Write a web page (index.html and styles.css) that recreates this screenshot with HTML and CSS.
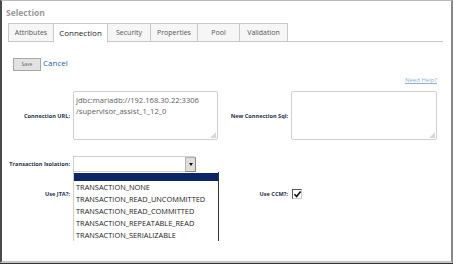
FILE: index.html
```html
<!DOCTYPE html>
<html lang="en">
	<head>
		<meta charset="UTF-8" />
		<meta name="viewport" content="width=device-width, initial-scale=1.0" />
		<title>Selection</title>
		<link rel="stylesheet" href="styles.css">
	</head>
	<body>
		<div class="frame">
			<h1 class="title">Selection</h1>
			<ul class="tabs">
				<li class="tab tab-attr">Attributes</li>
				<li class="tab tab-conn active">Connection</li>
				<li class="tab tab-sec">Security</li>
				<li class="tab tab-prop">Properties</li>
				<li class="tab tab-pool">Pool</li>
				<li class="tab tab-val">Validation</li>
			</ul>
			<div class="actions">
				<button class="btn">Save</button>
				<a class="link" href="#">Cancel</a>
			</div>
			<div class="help"><a href="#">Need Help?</a></div>
			<div class="form">
				<label class="label">Connection URL:</label>
				<div class="area">jdbc:mariadb://192.168.30.22:3306<br />/supervisor_assist_1_12_0<span class="grip"></span></div>
				<label class="label">New Connection Sql:</label>
				<div class="area"><span class="grip"></span></div>

				<label class="label">Transaction Isolation:</label>
				<div class="select-wrap">
					<div class="select">
						<span class="arrow"></span>
					</div>
					<!-- open dropdown list -->
					<ul class="options">
						<li class="option selected"></li>
						<li class="option">TRANSACTION_NONE</li>
						<li class="option">TRANSACTION_READ_UNCOMMITTED</li>
						<li class="option">TRANSACTION_READ_COMMITTED</li>
						<li class="option">TRANSACTION_REPEATABLE_READ</li>
						<li class="option">TRANSACTION_SERIALIZABLE</li>
					</ul>
				</div>
				<span></span>
				<span></span>

				<label class="label">Use JTA?:</label>
				<span></span>
				<label class="label">Use CCM?:</label>
				<div>
					<span class="check">
						<svg width="9" height="9" viewBox="0 0 9 9">
							<path d="M1.5 4.2 L3.6 6.6 L7.6 1.6" fill="none" stroke="#111" stroke-width="1.6" />
						</svg>
					</span>
				</div>
			</div>
		</div>
	</body>
</html>
```

FILE: styles.css
```css
* {
	box-sizing: border-box;
}
body {
	margin: 0;
	background: #333;
	font-family: "Open Sans", "DejaVu Sans", sans-serif;
}
.frame {
	width: 453px;
	height: 263px;
	background: #fff;
	border-top: 1px solid #bbb;
	border-left: 2px solid #4a4a4a;
	border-right: 2px solid #888;
	border-bottom: 2px solid #c4c4c4;
	overflow: hidden;
}
.title {
	margin: 6px 0 0 4px;
	font-size: 8.5px;
	line-height: 12px;
	font-weight: bold;
	color: #9a9a9a;
}
/* tab strip */
.tabs {
	display: flex;
	list-style: none;
	margin: 4px 0 0 6px;
	padding: 0;
	width: 435px;
	height: 19px;
	border-bottom: 1px solid #c8c8c8;
}
.tab {
	height: 19px;
	border: 1px solid #c8c8c8;
	border-left: none;
	background: #f6f6f6;
	color: #555;
	font-size: 7px;
	line-height: 17px;
	text-align: center;
}
.tab-attr {
	width: 46px;
	border-left: 1px solid #c8c8c8;
}
.tab-conn {
	width: 54px;
}
.tab-sec {
	width: 43px;
}
.tab-prop {
	width: 47px;
}
.tab-pool {
	width: 42px;
}
.tab-val {
	width: 48px;
}
.tab.active {
	background: #fff;
	color: #222;
	font-size: 8px;
	border-bottom-color: #fff;
	height: 20px;
}
.actions {
	display: flex;
	align-items: center;
	gap: 2px;
	margin: 16px 0 0 11px;
	height: 13px;
}
.btn {
	width: 28px;
	height: 13px;
	padding: 0;
	background: #e2e2e2;
	border: 1px solid #a8a8a8;
	color: #666;
	font-family: inherit;
	font-size: 5px;
	line-height: 11px;
}
.link {
	color: #1f5fa6;
	font-size: 8px;
	line-height: 10px;
	text-decoration: none;
	margin-top: -4px;
}
.help {
	margin: 4px 0 0;
	padding-right: 14px;
	text-align: right;
	font-size: 6px;
	line-height: 10px;
}
.help a {
	color: #8cb3d6;
}
/* field grid */
.form {
	display: grid;
	grid-template-columns: 68px 145px 67px 146px;
	grid-template-rows: 49px 16px 12px;
	column-gap: 3px;
	row-gap: 16px;
	align-items: center;
	margin-top: 6px;
}
.label {
	text-align: right;
	font-size: 5.6px;
	font-weight: bold;
	color: #26324a;
	white-space: nowrap;
}
.area {
	position: relative;
	height: 49px;
	border: 1px solid #cfcfcf;
	border-radius: 2px;
	padding: 3px 2px;
	font-size: 7.6px;
	line-height: 11px;
	color: #5e5e5e;
}
.grip {
	position: absolute;
	right: 1px;
	bottom: 1px;
	width: 6px;
	height: 6px;
	background: radial-gradient(circle, #aaa 0.6px, transparent 0.8px) 0 0 / 2px 2px;
	clip-path: polygon(100% 0, 100% 100%, 0 100%);
}
.select-wrap {
	position: relative;
	height: 16px;
}
.select {
	width: 122px;
	height: 16px;
	border: 1px solid #cfcfcf;
	border-right: none;
	position: relative;
	background: #fff;
}
.arrow {
	position: absolute;
	top: 0;
	right: -1px;
	width: 11px;
	height: 15px;
	background: #e0ded8;
	border: 1px solid #b8b6b0;
	border-right-color: #888;
	border-bottom-color: #888;
}
.arrow::after {
	content: "";
	position: absolute;
	left: 3px;
	top: 5px;
	border-left: 2px solid transparent;
	border-right: 2px solid transparent;
	border-top: 3px solid #111;
}
/* open dropdown list lies over the rows below */
.options {
	position: absolute;
	top: 16px;
	left: 0;
	width: 146px;
	list-style: none;
	margin: 0;
	padding: 0;
	background: #fff;
	border-left: 1px solid #cfcfcf;
	border-right: 1px solid #333;
	z-index: 2;
}
.option {
	height: 12px;
	padding-left: 2px;
	font-size: 7.4px;
	line-height: 12px;
	color: #1a1a1a;
	white-space: nowrap;
}
.option.selected {
	height: 8px;
	margin-top: 1px;
	background: #0c2468;
}
.check {
	display: block;
	width: 10px;
	height: 10px;
	margin-left: 1px;
	border: 1px solid #555;
	border-right-color: #ccc;
	border-bottom-color: #ccc;
	background: #fff;
}
.check svg {
	display: block;
}
```
